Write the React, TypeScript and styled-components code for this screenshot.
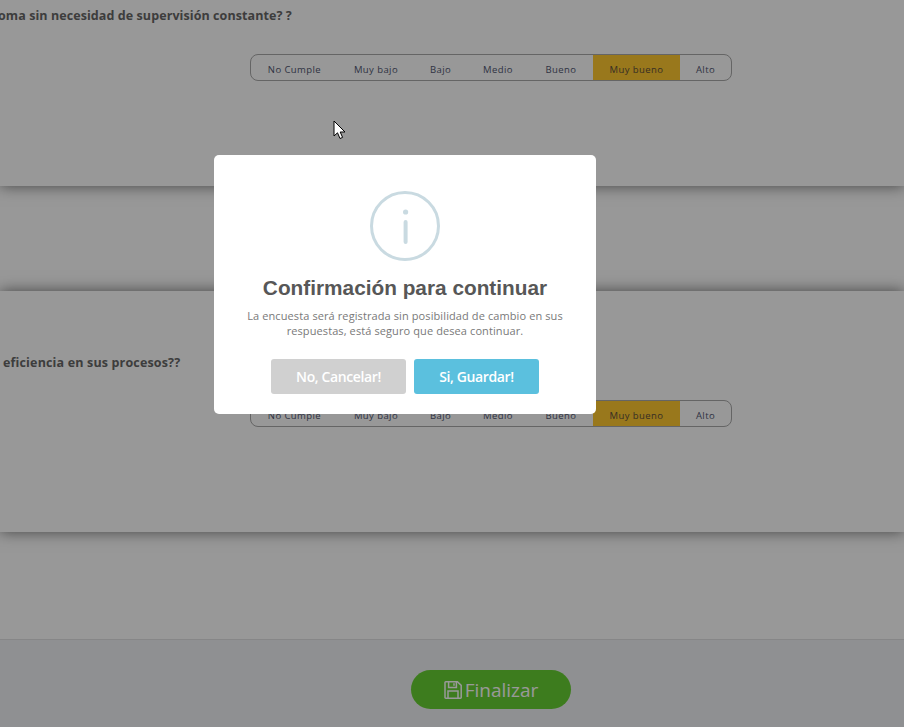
import React from "react";
import styled, { createGlobalStyle } from "styled-components";

const Global = createGlobalStyle`
  html, body { margin: 0; padding: 0; background: #fff; }
  body { font-family: "Open Sans", "Liberation Sans", sans-serif; overflow: hidden; }
`;

const Page = styled.div`
  width: 904px;
  height: 727px;
  overflow: hidden;
  display: flex;
  flex-direction: column;
  background: #fdfdfd;
`;

const Card = styled.section<{ $height: number; $top: number }>`
  height: ${(p) => p.$height}px;
  flex: none;
  box-sizing: border-box;
  padding-top: ${(p) => p.$top}px;
  background: #fdfdfd;
  box-shadow: 0 0 14px rgba(0, 0, 0, 0.55);
  position: relative;
  overflow: visible;
`;

const Gap = styled.div<{ $height: number }>`
  height: ${(p) => p.$height}px;
  flex: none;
`;

const Question = styled.h3<{ $indent: number; $track: number }>`
  margin: 0;
  padding-top: 1px;
  text-indent: ${(p) => p.$indent}px;
  font-size: 12.5px;
  line-height: 16px;
  font-weight: 700;
  letter-spacing: ${(p) => p.$track}px;
  color: #666;
  white-space: nowrap;
`;

const ScaleRow = styled.div<{ $top: number }>`
  display: flex;
  margin-top: ${(p) => p.$top}px;
  padding-left: 250px;
`;

const Scale = styled.div`
  width: 482px;
  height: 27px;
  box-sizing: border-box;
  border: 1px solid #a8a8a8;
  border-radius: 8px;
  display: flex;
  overflow: hidden;
`;

const ScaleItem = styled.div<{ $active?: boolean; $w: number }>`
  width: ${(p) => p.$w}px;
  flex: none;
  display: flex;
  align-items: center;
  justify-content: center;
  padding-top: 3px;
  box-sizing: border-box;
  font-size: 9.5px;
  letter-spacing: 0.42px;
  color: ${(p) => (p.$active ? "#5c4e3c" : "#505670")};
  background: ${(p) => (p.$active ? "#ffc830" : "transparent")};
`;

const Footer = styled.footer`
  flex: 1;
  background: #eef0f3;
  border-top: 1px solid #e0e0e2;
  display: flex;
  justify-content: flex-start;
  padding: 30px 0 0 411px;
`;

const FinishButton = styled.button`
  width: 160px;
  height: 39px;
  border: 0;
  border-radius: 20px;
  background: #67cf32;
  color: #fff;
  font: 400 19px "Open Sans", sans-serif;
  display: flex;
  align-items: center;
  justify-content: center;
  gap: 3px;
  padding: 0;
`;

const SaveIcon = styled.svg`
  width: 18px;
  height: 18px;
  flex: none;
`;

const Overlay = styled.div`
  position: fixed;
  inset: 0;
  background: rgba(0, 0, 0, 0.4);
  padding: 155px 0 0 214px;
  box-sizing: border-box;
`;

const Modal = styled.div`
  width: 382px;
  height: 259px;
  box-sizing: border-box;
  background: #fff;
  border-radius: 5px;
  padding-top: 36px;
  display: flex;
  flex-direction: column;
  align-items: center;
`;

const Icon = styled.svg`
  width: 70px;
  height: 70px;
  flex: none;
  display: block;
`;

const Title = styled.h2`
  margin: 15px 0 0;
  font: 700 20.8px/24px "Liberation Sans", Arial, sans-serif;
  color: #575757;
`;

const Message = styled.p`
  margin: 9px 0 0;
  width: 340px;
  text-align: center;
  font-size: 11px;
  line-height: 14.6px;
  letter-spacing: 0.1px;
  color: #797979;
`;

const Actions = styled.div`
  margin-top: 20.8px;
  display: flex;
  gap: 8px;
`;

const ActionButton = styled.button<{ $w: number; $bg: string }>`
  width: ${(p) => p.$w}px;
  height: 35px;
  border: 0;
  border-radius: 3px;
  padding: 0;
  background: ${(p) => p.$bg};
  color: #fff;
  font: 600 14px "Open Sans", sans-serif;
  letter-spacing: -0.38px;
`;

const Cursor = styled.svg`
  position: fixed;
  left: 333px;
  top: 120px;
  width: 13px;
  height: 20px;
`;

const items: [string, number][] = [
  ["No Cumple", 87],
  ["Muy bajo", 76],
  ["Bajo", 53],
  ["Medio", 62],
  ["Bueno", 64],
  ["Muy bueno", 87],
  ["Alto", 51],
];

const ScaleBar = () => (
  <Scale>
    {items.map(([label, w]) => (
      <ScaleItem key={label} $w={w} $active={label === "Muy bueno"}>
        {label}
      </ScaleItem>
    ))}
  </Scale>
);

export default function App() {
  return (
    <>
      <Global />
      <Page>
        <Card $height={186} $top={7}>
          <Question $indent={-2} $track={0.08}>oma sin necesidad de supervisión constante? ?</Question>
          <ScaleRow $top={30}>
            <ScaleBar />
          </ScaleRow>
        </Card>
        <Gap $height={105} />
        <Card $height={241} $top={63}>
          <Question $indent={3} $track={0.16}>eficiencia en sus procesos??</Question>
          <ScaleRow $top={29}>
            <ScaleBar />
          </ScaleRow>
        </Card>
        <Gap $height={107} />
        <Footer>
          <FinishButton>
            <SaveIcon viewBox="0 0 18 18" fill="none" stroke="#fff" strokeWidth="1.5">
              <path d="M1 1.6 a0.8 0.8 0 0 1 0.8 -0.8 H13.4 L17.2 4.4 V16.4 a0.8 0.8 0 0 1 -0.8 0.8 H1.8 a0.8 0.8 0 0 1 -0.8 -0.8 Z" />
              <path d="M4.6 1 V6.4 H12.4 V1" />
              <path d="M10 2.2 V4.8" />
              <path d="M4 17 V10 H14 V17" />
            </SaveIcon>
            Finalizar
          </FinishButton>
        </Footer>
      </Page>
      <Overlay>
        <Modal>
          <Icon viewBox="0 0 70 70">
            <circle cx="35" cy="35" r="33.5" fill="none" stroke="#c9dae1" strokeWidth="3" />
            <circle cx="35.6" cy="21" r="2.6" fill="#c9dae1" />
            <rect x="33.6" y="29" width="4" height="24" rx="2" fill="#c9dae1" />
          </Icon>
          <Title>Confirmación para continuar</Title>
          <Message>La encuesta será registrada sin posibilidad de cambio en sus respuestas, está seguro que desea continuar.</Message>
          <Actions>
            <ActionButton $w={135} $bg="#d0d0d0">No, Cancelar!</ActionButton>
            <ActionButton $w={125} $bg="#5bc0de">Si, Guardar!</ActionButton>
          </Actions>
        </Modal>
      </Overlay>
      <Cursor viewBox="0 0 13 20">
        <path d="M1 1 L1 16 L4.5 12.8 L7 18.5 L9.6 17.4 L7.2 12 L12 12 Z" fill="#fff" stroke="#000" strokeWidth="1" strokeLinejoin="miter" />
      </Cursor>
    </>
  );
}
